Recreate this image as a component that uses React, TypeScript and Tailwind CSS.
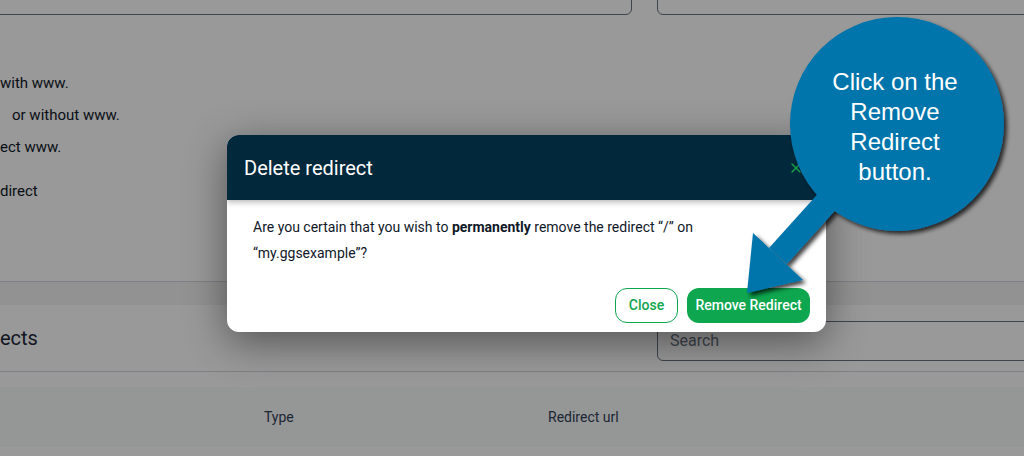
import { X } from "lucide-react";

export default function App() {
  return (
    <div className="relative h-[456px] w-[1024px] overflow-hidden bg-white font-['Roboto','Noto_Sans',sans-serif] text-gray-800">
      {/* page behind the dialog */}
      <div className="flex h-[282px] flex-col border-b border-gray-300 bg-white">
        <div className="-mt-[25px] flex gap-[25px]">
          <div className="-ml-[8px] h-[40px] w-[640px] flex-none rounded-md border border-gray-500" />
          <div className="-mr-[16px] flex h-[40px] flex-1 items-center rounded-md border border-gray-500 px-[12px] text-[15px] text-gray-500">
            Enter a domain
          </div>
        </div>
        <div className="mt-[52px] text-[15px] leading-[32px] text-gray-900">
          <div>with www.</div>
          <div className="pl-[12px]">or without www.</div>
          <div>ect www.</div>
          <div className="mt-[12px]">direct</div>
        </div>
      </div>
      <div className="h-[23px] bg-gray-100" />
      <div className="bg-white">
        <div className="flex h-[67px] items-center justify-between border-b border-gray-300">
          <div className="text-[20px] text-gray-800">ects</div>
          <div className="-mr-[16px] mt-[6px] flex h-[40px] w-[383px] items-center rounded-md border border-gray-500 px-[12px] text-[16px] text-gray-500">
            Search
          </div>
        </div>
        <div className="mt-[15px] flex h-[60px] items-center bg-gray-50 text-[14px] text-slate-700">
          <div className="ml-[264px] w-[284px]">Type</div>
          <div>Redirect url</div>
        </div>
      </div>

      {/* overlay */}
      <div className="absolute inset-0 bg-black/40" />

      {/* dialog */}
      <div className="absolute left-[227px] top-[135px] w-[599px] overflow-hidden rounded-xl bg-white shadow-[0_10px_40px_rgba(0,0,0,0.45)]">
        <div className="flex h-[65px] items-center justify-between bg-[#02283b] pl-[17px] pr-[22px] shadow-[0_2px_6px_rgba(0,0,0,0.3)]">
          <h2 className="text-[20px] font-normal text-white">Delete redirect</h2>
          <X className="h-[16px] w-[16px] text-[#16a34a]" strokeWidth={2} />
        </div>
        <div className="px-[26px] pt-[14px] text-[14px] leading-[26px] text-gray-900">
          Are you certain that you wish to <b className="font-bold">permanently</b> remove the redirect “/” on
          <br />
          “my.ggsexample”?
        </div>
        <div className="mt-[22px] flex justify-end gap-[9px] pb-[9px] pr-[16px]">
          <button className="h-[35px] w-[63px] rounded-xl border border-[#0ea64f] text-[14px] font-medium text-[#0ea64f]">
            Close
          </button>
          <button className="h-[35px] w-[123px] rounded-xl bg-[#0ea64f] text-[14px] font-medium text-white">
            Remove Redirect
          </button>
        </div>
      </div>

      {/* callout bubble */}
      <svg className="pointer-events-none absolute inset-0" width="1024" height="456" viewBox="0 0 1024 456">
        <defs>
          <filter id="bubbleShadow" x="-20%" y="-20%" width="140%" height="140%">
            <feDropShadow dx="3" dy="3" stdDeviation="2" floodColor="#000" floodOpacity="0.75" />
          </filter>
        </defs>
        <g filter="url(#bubbleShadow)" fill="#0074ab">
          <circle cx="897" cy="124" r="107" />
          <polygon points="787,264 769,248 851,157 869,173" />
          <polygon points="753,233 803,280 747,293" />
        </g>
      </svg>
      <div className="absolute left-[797px] top-[67px] w-[196px] text-center font-['Liberation_Sans',Arial,sans-serif] text-[24px] leading-[30px] text-white">
        Click on the
        <br />
        Remove
        <br />
        Redirect
        <br />
        button.
      </div>
    </div>
  );
}
